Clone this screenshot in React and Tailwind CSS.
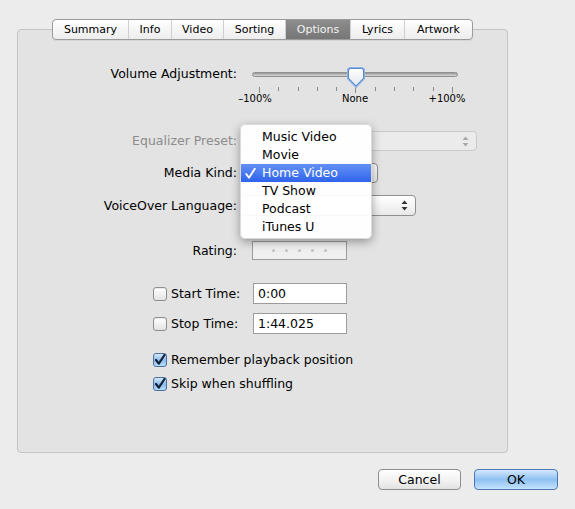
import React from "react"

const tabs = [
  { name: "Summary", w: "w-[75px]" },
  { name: "Info", w: "w-[43px]" },
  { name: "Video", w: "w-[52px]" },
  { name: "Sorting", w: "w-[62px]" },
  { name: "Options", w: "w-[65px]", active: true },
  { name: "Lyrics", w: "w-[54px]" },
  { name: "Artwork", w: "w-[68px]" },
]

const kinds = ["Music Video", "Movie", "Home Video", "TV Show", "Podcast", "iTunes U"]

function Arrows({ color = "#333" }) {
  return (
    <svg width="7" height="11" viewBox="0 0 7 11">
      <path d="M3.5 0.5 L6.5 4 H0.5 Z" fill={color} />
      <path d="M3.5 10.5 L6.5 7 H0.5 Z" fill={color} />
    </svg>
  )
}

function Checkbox({ checked }) {
  if (checked) {
    return (
      <div className="w-[14px] h-[14px] rounded-[3px] border border-[#4d6f9c] bg-gradient-to-b from-[#d6e8fb] via-[#8fbcec] to-[#b9dafa] flex items-center justify-center shrink-0">
        <svg width="12" height="12" viewBox="0 0 12 12">
          <path d="M2 6 L4.8 9.6 L10.5 1" fill="none" stroke="#10213a" strokeWidth="2.2" strokeLinecap="round" strokeLinejoin="round" />
        </svg>
      </div>
    )
  }
  return (
    <div className="w-[14px] h-[14px] rounded-[3px] border border-[#8e8e8e] bg-gradient-to-b from-white to-[#e4e4e4] shadow-[inset_0_1px_1px_rgba(0,0,0,0.08)] shrink-0" />
  )
}

function Label({ children, muted }) {
  return <div className={`w-[219px] text-right shrink-0 ${muted ? "text-[#8c8c8c]" : "text-black"}`}>{children}</div>
}

export default function App() {
  const ticks = Array.from({ length: 11 })

  return (
    <div className="relative w-[575px] h-[509px] bg-[#ececec] pt-[29px] font-['DejaVu_Sans',sans-serif] text-[12.5px] leading-[16px] text-black overflow-hidden">
      {/* tab panel */}
      <div className="ml-[17px] w-[491px] h-[424px] rounded-[4px] border border-[#c4c4c4] bg-[#e3e3e3]">
        <div className="flex justify-center -mt-[11px]">
          <div className="flex h-[21px] rounded-[4px] border border-[#9b9b9b] bg-gradient-to-b from-white to-[#ededed] shadow-[0_1px_0_rgba(0,0,0,0.06)] overflow-hidden text-[11px]">
            {tabs.map((t, i) => (
              <div
                key={t.name}
                className={`${t.w} flex items-center justify-center ${i > 0 ? "border-l border-[#cfcfcf]" : ""} ${
                  t.active ? "bg-gradient-to-b from-[#8d8d8d] to-[#767676] text-[#f4f4f4] border-[#777]" : "text-black"
                }`}
              >
                {t.name}
              </div>
            ))}
          </div>
        </div>

        {/* volume slider */}
        <div className="flex items-center h-[20px] mt-[24px]">
          <Label>Volume Adjustment:</Label>
          <div className="relative ml-[15px] w-[206px] h-[20px] flex items-center">
            <div className="w-full h-[5px] rounded-full border border-[#8f8f8f] bg-gradient-to-b from-[#9a9a9a] to-[#d8d8d8]" />
            <svg className="absolute left-[95px] top-[3px]" width="18" height="21" viewBox="0 0 18 21">
              <defs>
                <linearGradient id="knob" x1="0" y1="0" x2="0" y2="1">
                  <stop offset="0" stopColor="#ffffff" />
                  <stop offset="1" stopColor="#e2e6ec" />
                </linearGradient>
              </defs>
              <path d="M3.5 1 H14.5 Q17 1 17 3.5 V11.5 L9 19.8 L1 11.5 V3.5 Q1 1 3.5 1 Z" fill="url(#knob)" stroke="#8cb4e6" strokeWidth="2" />
              <path d="M3.5 1.5 H14.5 Q16.5 1.5 16.5 3.5 V11.3 L9 19 L1.5 11.3 V3.5 Q1.5 1.5 3.5 1.5 Z" fill="none" stroke="#4f7fc0" strokeWidth="0.8" />
            </svg>
          </div>
        </div>
        <div className="flex ml-[241px] w-[194px] justify-between mt-[3px]">
          {ticks.map((_, i) => (
            <div key={i} className={`w-px bg-[#8a8a8a] ${i === 0 || i === 5 || i === 10 ? "h-[6px]" : "h-[4px]"}`} />
          ))}
        </div>
        <div className="flex ml-[217px] text-[10px] leading-[12px] mt-[0px]">
          <div className="w-[40px] text-center">–100%</div>
          <div className="w-[40px] text-center ml-[60px]">None</div>
          <div className="w-[40px] text-center ml-[52px]">+100%</div>
        </div>

        {/* popups */}
        <div className="flex items-center h-[20px] mt-[26px]">
          <Label muted>Equalizer Preset:</Label>
          <div className="ml-[3px] w-[237px] h-[20px] rounded-[4px] border border-[#cacaca] bg-[#ebebeb] flex items-center justify-end pr-[7px]">
            <Arrows color="#a8a8a8" />
          </div>
        </div>
        <div className="flex items-center h-[20px] mt-[12px]">
          <Label>Media Kind:</Label>
          <div className="ml-[3px] w-[138px] h-[20px] rounded-[4px] border border-[#8f8f8f] bg-gradient-to-b from-white to-[#e6e6e6]" />
        </div>
        <div className="flex items-center h-[21px] mt-[12px]">
          <Label>VoiceOver Language:</Label>
          <div className="ml-[3px] w-[176px] h-[21px] rounded-[4px] border border-[#8f8f8f] bg-gradient-to-b from-white to-[#e9e9e9] flex items-center justify-end pr-[7px]">
            <Arrows />
          </div>
        </div>

        {/* rating */}
        <div className="flex items-center h-[19px] mt-[25px]">
          <Label>Rating:</Label>
          <div className="ml-[15px] w-[95px] h-[19px] border border-[#9c9c9c] bg-[#f0f0f0] flex items-center justify-center gap-[10px] pr-[1px]">
            {[0, 1, 2, 3, 4].map((i) => (
              <div key={i} className="w-[3px] h-[3px] rounded-full bg-[#c2c2c2]" />
            ))}
          </div>
        </div>

        {/* start / stop */}
        <div className="flex items-center h-[21px] mt-[23px] ml-[135px]">
          <Checkbox />
          <div className="ml-[4px] w-[82px]">Start Time:</div>
          <div className="w-[94px] h-[21px] border border-[#9c9c9c] bg-white flex items-center pl-[4px]">0:00</div>
        </div>
        <div className="flex items-center h-[21px] mt-[9px] ml-[135px]">
          <Checkbox />
          <div className="ml-[4px] w-[82px]">Stop Time:</div>
          <div className="w-[94px] h-[21px] border border-[#9c9c9c] bg-white flex items-center pl-[4px]">1:44.025</div>
        </div>

        <div className="flex items-center h-[16px] mt-[18px] ml-[135px]">
          <Checkbox checked />
          <div className="ml-[4px]">Remember playback position</div>
        </div>
        <div className="flex items-center h-[16px] mt-[8px] ml-[135px]">
          <Checkbox checked />
          <div className="ml-[4px]">Skip when shuffling</div>
        </div>
      </div>

      {/* buttons */}
      <div className="flex mt-[16px] ml-[378px] gap-[13px]">
        <div className="w-[83px] h-[21px] rounded-[4px] border border-[#8e8e8e] bg-gradient-to-b from-white via-[#f3f3f3] to-[#e2e2e2] flex items-center justify-center">
          Cancel
        </div>
        <div className="w-[84px] h-[21px] rounded-[4px] border border-[#4f79b5] bg-gradient-to-b from-[#d4e8fc] via-[#8fc1f2] to-[#c3e2fd] flex items-center justify-center">
          OK
        </div>
      </div>

      {/* open Media Kind menu */}
      <div className="absolute left-[240px] top-[124px] w-[132px] h-[115px] rounded-[5px] bg-white/95 shadow-[0_3px_10px_rgba(0,0,0,0.35)] border border-[#dadada] pt-[3px]">
        {kinds.map((k) => {
          const sel = k === "Home Video"
          return (
            <div
              key={k}
              className={`h-[18px] flex items-center ${sel ? "bg-gradient-to-b from-[#6490f5] to-[#2f63ec] text-white" : "text-black"}`}
            >
              <div className="w-[21px] pl-[4px] flex items-center">
                {sel && (
                  <svg width="11" height="11" viewBox="0 0 11 11">
                    <path d="M1.2 6 L4 9.8 L9.8 0.8" fill="none" stroke="#ffffff" strokeWidth="1.9" strokeLinecap="round" strokeLinejoin="round" />
                  </svg>
                )}
              </div>
              <div>{k}</div>
            </div>
          )
        })}
      </div>
    </div>
  )
}
